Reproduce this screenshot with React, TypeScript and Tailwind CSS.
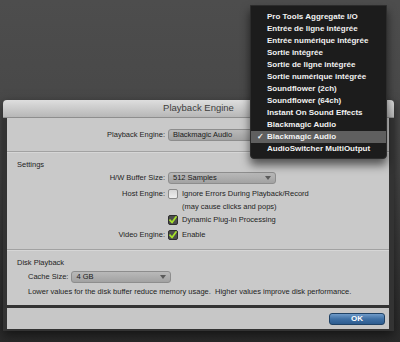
const menuItems = [
  'Pro Tools Aggregate I/O',
  'Entrée de ligne intégrée',
  'Entrée numérique intégrée',
  'Sortie intégrée',
  'Sortie de ligne intégrée',
  'Sortie numérique intégrée',
  'Soundflower (2ch)',
  'Soundflower (64ch)',
  'Instant On Sound Effects',
  'Blackmagic Audio',
  'Blackmagic Audio',
  'AudioSwitcher MultiOutput',
];
const SELECTED = 10;

function Dropdown({ value, width }: { value: string; width: string }) {
  return (
    <div
      className={`${width} h-[12px] flex items-center justify-between pl-[4px] pr-[4px] rounded-[3px] border border-[#8d8d8d] bg-gradient-to-b from-[#b9b9b9] to-[#a2a2a2] text-[#1a1a1a]`}
    >
      <span>{value}</span>
      {/* little down arrow */}
      <svg width="6" height="4" viewBox="0 0 6 4">
        <path d="M0 0h6L3 4z" fill="#5a5a5a" />
      </svg>
    </div>
  );
}

function Checkbox({ checked }: { checked?: boolean }) {
  if (!checked) {
    return (
      <div className="w-[10px] h-[10px] rounded-[2px] border border-[#8a8a8a] bg-gradient-to-b from-[#d6d6d6] to-[#eeeeee]" />
    );
  }
  return (
    <div className="w-[10px] h-[10px] rounded-[2px] border border-[#2e2e2e] bg-[#4d4d4d] flex items-center justify-center">
      <svg width="8" height="8" viewBox="0 0 8 8">
        <path d="M1 4.2l2 2.3L7 1" fill="none" stroke="#a6e22a" strokeWidth={1.8} strokeLinecap="round" strokeLinejoin="round" />
      </svg>
    </div>
  );
}

function LabelRow({ label, children, className = '' }: { label?: string; children: React.ReactNode; className?: string }) {
  return (
    <div className={`flex items-center h-[12px] ${className}`}>
      <div className="w-[158px] text-right shrink-0">{label}</div>
      <div className="ml-[3px] flex items-center gap-[4px]">{children}</div>
    </div>
  );
}

function Separator() {
  return <div className="h-[2px] border-t border-[#a2a2a2] border-b border-b-[#d6d6d6]" />;
}

export default function App() {
  return (
    <div className="relative w-[400px] h-[342px] overflow-hidden bg-gradient-to-b from-[#4d4d4d] via-[#454545] to-[#2a2a2a] pt-[100px] pl-[3px] font-['Liberation_Sans',Arial,sans-serif]">
      {/* Dialog window */}
      <div className="w-[391px] shadow-[0_4px_10px_rgba(0,0,0,0.55)]">
        {/* Title bar */}
        <div className="h-[18px] rounded-t-[4px] bg-gradient-to-b from-[#dedede] to-[#b7b7b7] border-b border-[#8e8e8e] flex items-center justify-center text-[9.5px] text-[#3d3d3d]">
          Playback Engine
        </div>

        {/* Body */}
        <div className="bg-[#333333] pl-[4px] pr-[5px] pb-[2px]">
          <div className="h-[187px] bg-[#c9c9c9] text-[7.5px] text-[#1e1e1e] flex flex-col">
            {/* Engine */}
            <div className="h-[33px] flex items-center">
              <LabelRow label="Playback Engine:">
                <Dropdown value="Blackmagic Audio" width="w-[160px]" />
              </LabelRow>
            </div>
            <Separator />

            {/* Settings */}
            <div className="h-[96px] flex flex-col pt-[6px]">
              <div className="h-[12px] flex items-center pl-[10px]">Settings</div>
              <LabelRow label="H/W Buffer Size:" className="mt-[1px]">
                <Dropdown value="512 Samples" width="w-[108px]" />
              </LabelRow>
              <LabelRow label="Host Engine:" className="mt-[4px]">
                <Checkbox />
                <span>Ignore Errors During Playback/Record</span>
              </LabelRow>
              <div className="h-[12px] flex items-center pl-[175px] mt-[1px]">(may cause clicks and pops)</div>
              <LabelRow className="mt-[1px]">
                <Checkbox checked />
                <span>Dynamic Plug-in Processing</span>
              </LabelRow>
              <LabelRow label="Video Engine:" className="mt-[3px]">
                <Checkbox checked />
                <span>Enable</span>
              </LabelRow>
            </div>
            <Separator />

            {/* Disk playback */}
            <div className="flex flex-col pt-[6px]">
              <div className="h-[12px] flex items-center pl-[10px]">Disk Playback</div>
              <div className="h-[12px] flex items-center pl-[21px] gap-[3px] mt-[2px]">
                <span>Cache Size:</span>
                <Dropdown value="4 GB" width="w-[100px]" />
              </div>
              <div className="h-[12px] flex items-center pl-[21px] mt-[3px]">
                Lower values for the disk buffer reduce memory usage.&nbsp; Higher values improve disk performance.
              </div>
            </div>
          </div>

          {/* Button bar */}
          <div className="mt-[3px] h-[21px] bg-[#c7c7c7] flex items-center justify-end pr-[4px]">
            <button className="w-[56px] h-[12px] rounded-[3px] border border-[#1f4266] bg-gradient-to-b from-[#6f9bc9] via-[#3f70a5] to-[#2d5c8f] text-white text-[8px] font-bold flex items-center justify-center">
              OK
            </button>
          </div>
        </div>
      </div>

      {/* Popup menu */}
      <div className="absolute left-[250px] top-[5px] w-[137px] pt-[5px] pb-[3px] rounded-b-[4px] bg-[#1c1c1c] border border-[#2c2c2c] shadow-[0_6px_10px_rgba(0,0,0,0.6)] text-[8px] font-bold text-[#f2f2f2]">
        {menuItems.map((item, i) => (
          <div
            key={i}
            className={`relative h-[12px] flex items-center pl-[16px] ${i === SELECTED ? 'bg-[#5f5f5f]' : ''}`}
          >
            {i === SELECTED && <span className="absolute left-[6px]">✓</span>}
            {item}
          </div>
        ))}
      </div>
    </div>
  );
}
